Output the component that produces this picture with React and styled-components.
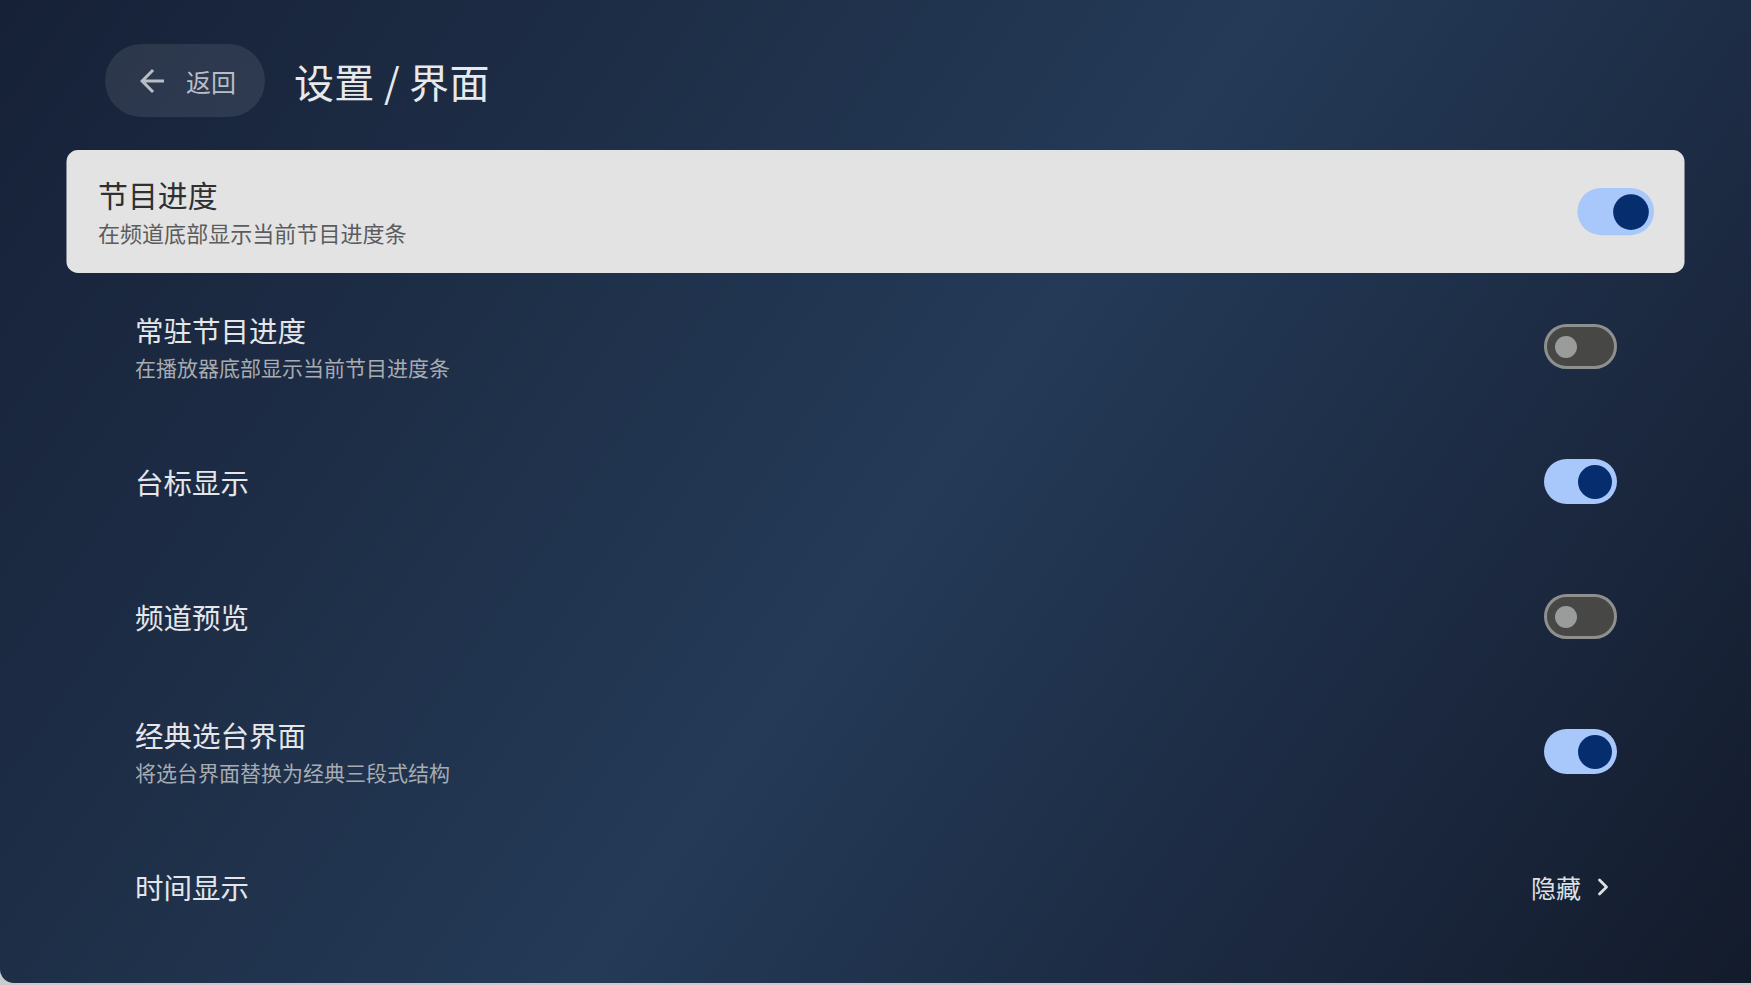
import React, { useState } from "react";
import styled, { createGlobalStyle, css } from "styled-components";

const GlobalStyle = createGlobalStyle`
  html, body {
    margin: 0;
    padding: 0;
    background: #c9cbce;
  }
  body {
    font-family: "Noto Sans CJK SC", "Noto Sans", Roboto, sans-serif;
  }
  * {
    box-sizing: border-box;
  }
`;

const Screen = styled.div`
  height: calc(100vh - 2px);
  overflow: hidden;
  border-bottom-left-radius: 14px;
  background: linear-gradient(125deg, #162137 0%, #1e2e47 28%, #243a57 52%, #1c2a42 76%, #131b2b 100%);
  padding: 44px 105px 0 105px;
  display: flex;
  flex-direction: column;
  gap: 36px;
`;

const Header = styled.div`
  display: flex;
  align-items: center;
  gap: 29px;
  height: 73px;
`;

const BackButton = styled.button`
  height: 73px;
  display: flex;
  align-items: center;
  gap: 16px;
  padding: 0 29px;
  border: none;
  border-radius: 37px;
  background: rgba(255, 255, 255, 0.09);
  color: #b9bdc5;
  font-family: inherit;
  font-size: 25px;
  cursor: pointer;
`;

const PageTitle = styled.h1`
  margin: 0;
  font-size: 40px;
  font-weight: 400;
  color: #e8e9eb;
  letter-spacing: 0.3px;
`;

const List = styled.div`
  display: flex;
  flex-direction: column;
  gap: 18px;
`;

const Row = styled.div`
  height: 117px;
  flex-shrink: 0;
  display: flex;
  align-items: center;
  justify-content: space-between;
  padding: 0 29px 0 30px;
  border-radius: 11px;
  ${(p) =>
    p.$focused &&
    css`
      background: #e3e3e3;
      transform: scale(1.05);
    `}
`;

const Texts = styled.div`
  display: flex;
  flex-direction: column;
`;

const RowTitle = styled.div`
  font-size: 28.5px;
  line-height: 34px;
  color: ${(p) => (p.$focused ? "#2f3032" : "#e4e6e9")};
`;

const RowDesc = styled.div`
  margin-top: 6px;
  font-size: 21px;
  line-height: 28px;
  color: ${(p) => (p.$focused ? "#5b5c5e" : "#a7abb2")};
`;

const Track = styled.div`
  width: 73px;
  height: 45px;
  border-radius: 23px;
  display: flex;
  align-items: center;
  flex-shrink: 0;
  ${(p) =>
    p.$on
      ? css`
          background: #a8c7fa;
          justify-content: flex-end;
          padding-right: 5px;
        `
      : css`
          background: #474846;
          border: 3px solid #8e908f;
          justify-content: flex-start;
          padding-left: 8px;
        `}
`;

const Thumb = styled.div`
  border-radius: 50%;
  ${(p) =>
    p.$on
      ? css`
          width: 34px;
          height: 34px;
          background: #062e6f;
        `
      : css`
          width: 22px;
          height: 22px;
          background: #9a9c9b;
        `}
`;

const Value = styled.div`
  display: flex;
  align-items: center;
  gap: 8px;
  font-size: 25px;
  color: #dfe1e4;
`;

function Switch({ on }) {
  return (
    <Track $on={on}>
      <Thumb $on={on} />
    </Track>
  );
}

const items = [
  { title: "节目进度", desc: "在频道底部显示当前节目进度条", on: true },
  { title: "常驻节目进度", desc: "在播放器底部显示当前节目进度条", on: false },
  { title: "台标显示", on: true },
  { title: "频道预览", on: false },
  { title: "经典选台界面", desc: "将选台界面替换为经典三段式结构", on: true },
];

export default function App() {
  const [focus] = useState(0);

  return (
    <>
      <GlobalStyle />
      <Screen>
        <Header>
          <BackButton>
            <svg width="36" height="36" viewBox="0 0 24 24" fill="currentColor">
              <path d="M20 11H7.83l5.59-5.59L12 4l-8 8 8 8 1.41-1.41L7.83 13H20v-2z" />
            </svg>
            返回
          </BackButton>
          <PageTitle>设置 / 界面</PageTitle>
        </Header>

        <List>
          {items.map((it, i) => (
            <Row key={it.title} $focused={i === focus}>
              <Texts>
                <RowTitle $focused={i === focus}>{it.title}</RowTitle>
                {it.desc && <RowDesc $focused={i === focus}>{it.desc}</RowDesc>}
              </Texts>
              <Switch on={it.on} />
            </Row>
          ))}
          <Row>
            <Texts>
              <RowTitle>时间显示</RowTitle>
            </Texts>
            <Value>
              隐藏
              <svg
                width="28"
                height="28"
                viewBox="0 0 24 24"
                fill="none"
                stroke="currentColor"
                strokeWidth="2.4"
                strokeLinecap="round"
                strokeLinejoin="round"
              >
                <path d="m9 6 6 6-6 6" />
              </svg>
            </Value>
          </Row>
        </List>
      </Screen>
    </>
  );
}
